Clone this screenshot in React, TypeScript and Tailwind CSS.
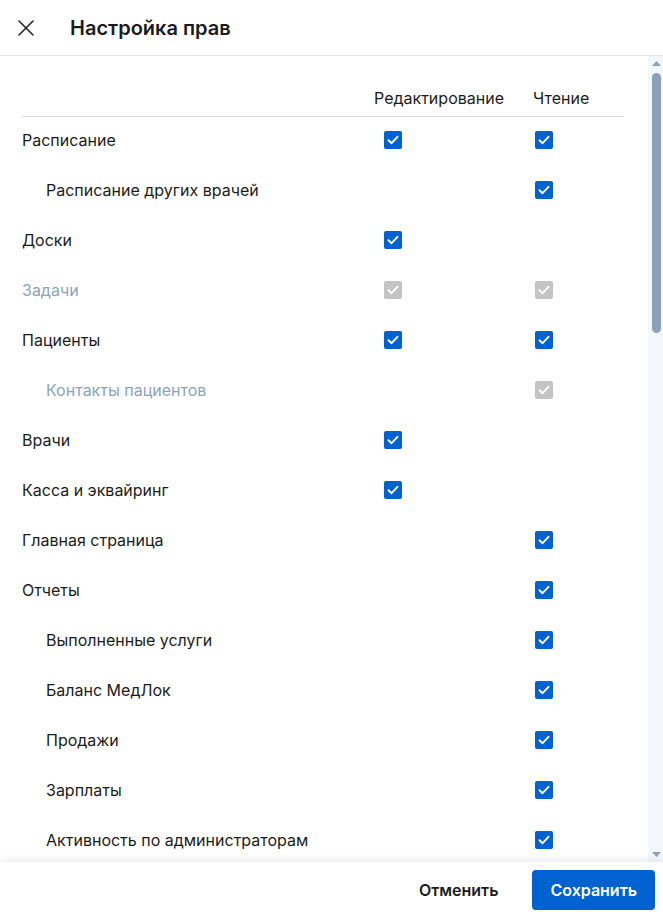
import { X } from 'lucide-react';

type Perm = {
    label: string;
    sub?: boolean;
    muted?: boolean;
    edit?: 'on' | 'off';
    read?: 'on' | 'off';
};

const perms: Perm[] = [
    { label: 'Расписание', edit: 'on', read: 'on' },
    { label: 'Расписание других врачей', sub: true, read: 'on' },
    { label: 'Доски', edit: 'on' },
    { label: 'Задачи', muted: true, edit: 'off', read: 'off' },
    { label: 'Пациенты', edit: 'on', read: 'on' },
    { label: 'Контакты пациентов', sub: true, muted: true, read: 'off' },
    { label: 'Врачи', edit: 'on' },
    { label: 'Касса и эквайринг', edit: 'on' },
    { label: 'Главная страница', read: 'on' },
    { label: 'Отчеты', read: 'on' },
    { label: 'Выполненные услуги', sub: true, read: 'on' },
    { label: 'Баланс МедЛок', sub: true, read: 'on' },
    { label: 'Продажи', sub: true, read: 'on' },
    { label: 'Зарплаты', sub: true, read: 'on' },
    { label: 'Активность по администраторам', sub: true, read: 'on' },
    { label: 'Активность по врачам', sub: true, read: 'on' },
];

function Check({ state }: { state?: 'on' | 'off' }) {
    if (!state) return null;
    return (
        <span
            className={`flex h-[18px] w-[18px] items-center justify-center rounded-[2px] ${
                state === 'on' ? 'bg-[#0061d0]' : 'bg-[#c4c4c4]'
            }`}
        >
            <svg width="12" height="10" viewBox="0 0 12 10" fill="none">
                <path d="M1.5 5.2 4.6 8.2 10.5 1.8" stroke="white" strokeWidth="1.9" strokeLinecap="round" strokeLinejoin="round" />
            </svg>
        </span>
    );
}

// drawn scrollbar (headless browser hides the native one)
function ScrollBar() {
    return (
        <div className="flex w-[15px] shrink-0 flex-col items-center bg-[#f3f6fa]">
            <div className="flex h-[15px] w-full items-center justify-center pl-[1px]">
                <svg width="9" height="5" viewBox="0 0 9 5">
                    <path d="M0 5 4.5 0 9 5Z" fill="#8ba1ba" />
                </svg>
            </div>
            <div className="mt-[2px] ml-[2px] h-[260px] w-[9px] rounded-full bg-[#8ba1ba]" />
            <div className="flex-1" />
            <div className="flex h-[15px] w-full items-center justify-center pl-[1px]">
                <svg width="9" height="5" viewBox="0 0 9 5">
                    <path d="M0 0 4.5 5 9 0Z" fill="#8ba1ba" />
                </svg>
            </div>
        </div>
    );
}

export default function App() {
    return (
        <div className="flex h-[917px] w-[663px] flex-col bg-white text-[#1b1b1b] font-['Inter','Noto_Sans',sans-serif]">
            {/* Header */}
            <div className="flex h-[56px] shrink-0 items-center border-b border-[#e2e2e2] pl-[12px]">
                <X size={28} className="text-[#222]" strokeWidth={1.3} />
                <h1 className="ml-[30px] text-[20px] font-semibold">Настройка прав</h1>
            </div>

            {/* Table */}
            <div className="flex min-h-0 flex-1">
                <div className="min-w-0 flex-1 overflow-hidden">
                    <div className="pl-[22px] pr-[24px] pt-[32px]">
                        <div className="grid grid-cols-[352px_159px_1fr] border-b border-[#e0e0e0] pb-[8px] text-[16px] leading-5">
                            <span />
                            <span>Редактирование</span>
                            <span>Чтение</span>
                        </div>
                        {perms.map((p) => (
                            <div key={p.label} className="grid h-[50px] grid-cols-[352px_159px_1fr] items-center pb-[4px] text-[16px]">
                                <span className={`${p.sub ? 'pl-[24px]' : ''} ${p.muted ? 'text-[#8ca3bd]' : ''}`}>{p.label}</span>
                                <span className="pl-[10px]">
                                    <Check state={p.edit} />
                                </span>
                                <span className="pl-[2px]">
                                    <Check state={p.read} />
                                </span>
                            </div>
                        ))}
                    </div>
                </div>
                <ScrollBar />
            </div>

            {/* Footer */}
            <div className="relative flex h-[55px] shrink-0 items-center justify-end gap-[34px] pr-[8px] shadow-[0_-2px_8px_rgba(0,0,0,0.08)]">
                <button className="text-[16px] font-semibold text-[#1b1b1b]">Отменить</button>
                <button className="h-[40px] rounded-[4px] bg-[#0061d0] px-[18px] text-[16px] font-semibold text-white">Сохранить</button>
            </div>
        </div>
    );
}
